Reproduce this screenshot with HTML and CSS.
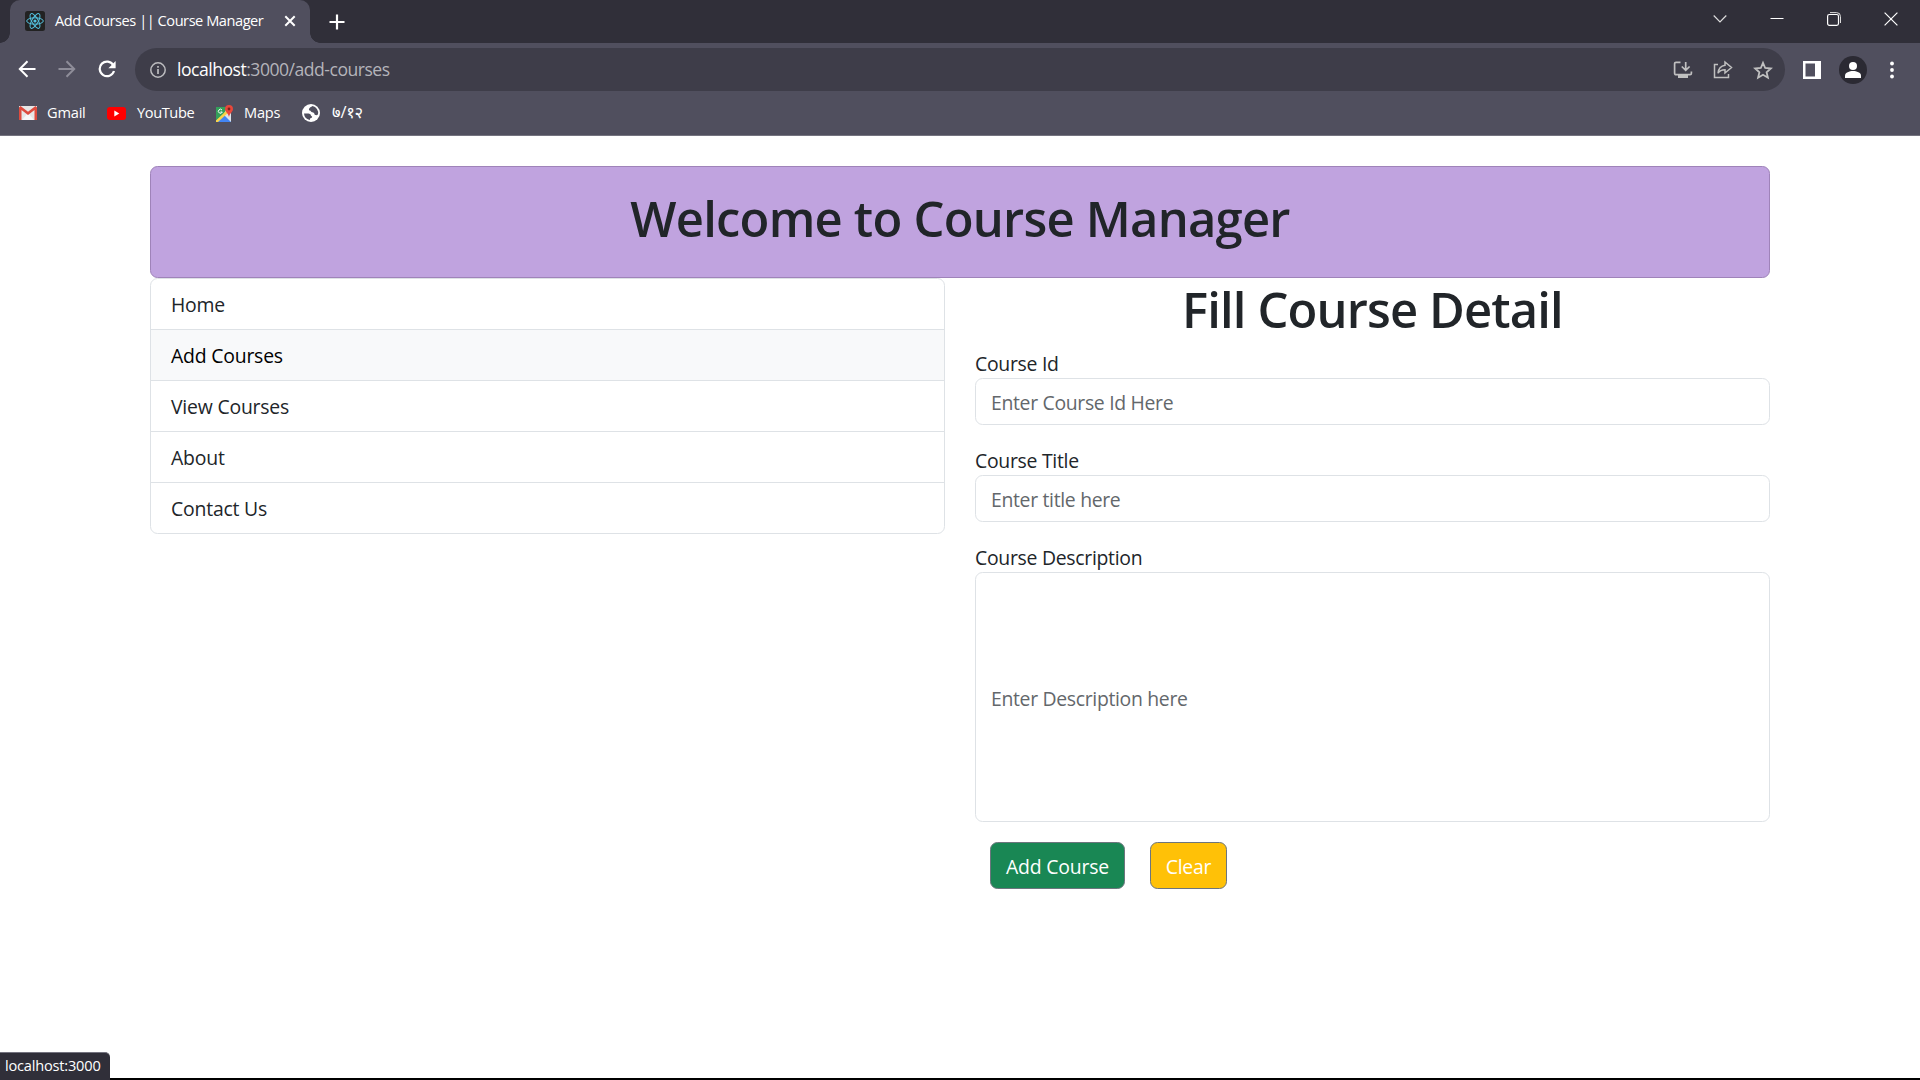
FILE: index.html
```html
<!DOCTYPE html>
<html lang="en">
<head>
<meta charset="utf-8">
<title>Add Courses || Course Manager</title>
<link rel="stylesheet" href="styles.css">
</head>
<body>
<header class="browser">
  <div class="tabstrip">
    <div class="tab">
      <svg class="favicon" width="20" height="20" viewBox="0 0 20 20"><rect width="20" height="20" rx="2.5" fill="#222"/><g fill="none" stroke="#53c1de" stroke-width="1"><ellipse cx="10" cy="10" rx="8.3" ry="3.2"/><ellipse cx="10" cy="10" rx="8.3" ry="3.2" transform="rotate(60 10 10)"/><ellipse cx="10" cy="10" rx="8.3" ry="3.2" transform="rotate(120 10 10)"/></g><circle cx="10" cy="10" r="1.6" fill="#53c1de"/></svg>
      <span class="tab-title">Add Courses || Course Manager</span>
      <svg class="tab-close" width="12" height="12" viewBox="0 0 12 12"><path d="M1.3 1.3l9.4 9.4M10.7 1.3l-9.4 9.4" stroke="#fff" stroke-width="2" fill="none"/></svg>
    </div>
    <svg class="new-tab" width="16" height="16" viewBox="0 0 16 16"><path d="M8 .5v15M.5 8h15" stroke="#fff" stroke-width="2.2" fill="none"/></svg>
    <div class="window-buttons">
      <svg width="14" height="14" viewBox="0 0 14 14"><path d="M.7 3.5L7 9.8l6.300-6.300" stroke="#ddd" stroke-width="1.200" fill="none"/></svg>
      <svg width="14" height="14" viewBox="0 0 14 14"><path d="M.5 6.500h13" stroke="#fff" fill="none"/></svg>
      <svg width="14" height="14" viewBox="0 0 14 14"><path d="M3 .6h6.500a4 4 0 0 1 4 4V11" stroke="#ddd" fill="none"/><rect x=".6" y="2.500" width="10.900" height="10.900" rx="1.800" stroke="#fff" stroke-width="1.200" fill="none"/></svg>
      <svg width="14" height="14" viewBox="0 0 14 14"><path d="M.6.6l12.800 12.800M13.400.6L.6 13.400" stroke="#fff" stroke-width="1.200" fill="none"/></svg>
    </div>
  </div>
  <div class="toolbar">
    <div class="nav-buttons">
      <svg width="18" height="18" viewBox="0 0 18 18"><path d="M17.500 9H2M9.500 1.300L1.800 9l7.700 7.700" stroke="#fff" stroke-width="2" fill="none"/></svg>
      <svg width="18" height="18" viewBox="0 0 18 18"><path d="M.5 9H16M8.500 1.300L16.200 9l-7.700 7.700" stroke="#8e8d99" stroke-width="2" fill="none"/></svg>
      <svg width="18" height="18" viewBox="0 0 18 18"><path d="M15.300 5.100A7.300 7.300 0 1 0 16 11" stroke="#fff" stroke-width="2.200" fill="none"/><path d="M17.600 1v7.200h-7.200z" fill="#fff"/></svg>
    </div>
    <div class="omnibox">
      <svg width="16" height="16" viewBox="0 0 16 16"><circle cx="8" cy="8" r="7.200" stroke="#bcbcbf" stroke-width="1.500" fill="none"/><path d="M8 7v5M8 4v1.700" stroke="#bcbcbf" stroke-width="1.700"/></svg>
      <span class="url"><b class="host">localhost</b>:3000/add-courses</span>
      <div class="page-actions">
        <svg width="20" height="20" viewBox="0 0 20 20"><path d="M7.500 2.300H3a1.400 1.400 0 0 0-1.400 1.400v9.600a1.400 1.400 0 0 0 1.400 1.400h14a1.400 1.400 0 0 0 1.400-1.400V11.500M12.700 2v8M8.800 6.500l3.900 3.900 3.900-3.900" stroke="#c0c0c0" stroke-width="1.700" fill="none"/><path d="M5 14.500h10v3.500H5z" fill="#c0c0c0"/></svg>
        <svg width="20" height="20" viewBox="0 0 20 20"><path d="M5 4.500H1.500v13h14V14M12 2l6.500 5.500L12 13v-3.300c-3.300 0-5.500 1-7 3.500.4-4 2.700-7.200 7-7.900z" stroke="#c0c0c0" stroke-width="1.500" fill="none"/></svg>
        <svg width="20" height="20" viewBox="0 0 20 20"><path d="M10 2.800l2.200 5.200 5.600.5-4.200 3.700 1.300 5.500-4.900-2.900-4.900 2.900 1.300-5.500L2.200 8.500l5.600-.5z" stroke="#c0c0c0" stroke-width="1.800" fill="none"/></svg>
      </div>
    </div>
    <svg class="side-panel" width="18" height="18" viewBox="0 0 18 18"><path fill="#fff" fill-rule="evenodd" d="M0 0h18v18H0zM2.500 2.500v13H12v-13z"/></svg>
    <svg class="profile" width="28" height="28" viewBox="0 0 28 28"><circle cx="14" cy="14" r="14" fill="#2b2a33"/><circle cx="14" cy="10" r="4" fill="#fff"/><path d="M6 22v-2.500C6 16.500 10.500 15 14 15s8 1.500 8 4.500V22z" fill="#fff"/></svg>
    <svg class="menu" width="4" height="18" viewBox="0 0 4 18"><g fill="#fff"><circle cx="2" cy="2.500" r="1.900"/><circle cx="2" cy="9" r="1.900"/><circle cx="2" cy="15.500" r="1.900"/></g></svg>
  </div>
  <nav class="bookmarks">
    <a class="bookmark gmail"><svg width="18" height="14" viewBox="0 0 18 14"><path d="M0 0h18v14H0z" fill="#e6e6e6"/><path d="M3 14l6-7 6 7z" fill="#f7f7f7"/><path d="M0 1.500V14h2.500V4L9 9l6.500-5v10H18V1.500L16.500 0 9 5.800 1.500 0z" fill="#dd4b3e"/></svg><span>Gmail</span></a>
    <a class="bookmark youtube"><svg width="19" height="13" viewBox="0 0 19 13"><rect width="19" height="13" rx="3" fill="#f00"/><path d="M7.300 3.500v6l5-3z" fill="#fff"/></svg><span>YouTube</span></a>
    <a class="bookmark maps"><svg width="19" height="19" viewBox="0 0 19 19"><path d="M1 3h15v15H1z" fill="#dce3e8"/><path d="M1 3h11L9 10 1 17z" fill="#34a05a"/><path d="M2 18l7-7 7 7z" fill="#4285f4"/><path d="M1 16.500L12 6l2 2L3 18H1z" fill="#f9d348"/><path d="M7 6a2 2 0 1 0 .3 2H5.500" stroke="#fff" fill="none"/><path d="M14 1a4 4 0 0 1 4 4c0 3-3.300 4-4 8-.7-4-4-5-4-8a4 4 0 0 1 4-4z" fill="#e8483b"/><circle cx="14" cy="5" r="1.400" fill="#7b231e"/></svg><span>Maps</span></a>
    <a class="bookmark globe"><svg width="18" height="18" viewBox="0 0 18 18"><circle cx="9" cy="9" r="9" fill="#fff"/><path d="M10.500 2C9 3.500 7.500 3 7 5c-.4 1.800 1.500 1.300 2 2.500.4 1.200 2 .4 3 1.500.8 1 .1 1.700 1.500 2 1 .3 1.800.1 2.500-.7A7.100 7.100 0 0 0 10.500 2zM2 9.500c2 0 4.500-.3 6 .5 1.200.8.500 1.700 1.700 2.200 1 .5.300 1.500-.7 1.700-1.200.2-.7 1.200-1.400 2A7.100 7.100 0 0 1 2 9.500z" fill="#504f5e"/></svg><span>७/१२</span></a>
  </nav>
</header>

<main class="page">
  <section class="banner"><h1 class="title">Welcome to Course Manager</h1></section>
  <div class="columns">
    <nav class="menu-list">
      <a class="menu-item">Home</a>
      <a class="menu-item active">Add Courses</a>
      <a class="menu-item">View Courses</a>
      <a class="menu-item">About</a>
      <a class="menu-item">Contact Us</a>
    </nav>
    <form class="course-form">
      <h1 class="title form-title">Fill Course Detail</h1>
      <div class="field"><label for="cid">Course Id</label><input id="cid" type="text" placeholder="Enter Course Id Here"></div>
      <div class="field"><label for="ctitle">Course Title</label><input id="ctitle" type="text" placeholder="Enter title here"></div>
      <div class="field"><label for="cdesc">Course Description</label><input id="cdesc" class="tall" type="text" placeholder="Enter Description here"></div>
      <div class="actions">
        <button class="btn success" type="button">Add Course</button>
        <button class="btn warning" type="button">Clear</button>
      </div>
    </form>
  </div>
</main>
<div class="screen-edge"></div>
<div class="status">localhost:3000</div>
</body>
</html>
```
FILE: styles.css
```css
* { box-sizing: border-box; }

body {
  margin: 0;
  height: 1080px;
  display: flex;
  flex-direction: column;
  overflow: hidden;
  background: #fff;
  color: #212529;
  font: 19.4px/30px "Open Sans", "Noto Sans", sans-serif;
  letter-spacing: -0.2px;
}

svg { display: block; flex: none; }

/* Browser window */
.browser {
  height: 136px;
  background: #504f5e;
  border-bottom: 1px solid #74737f;
  color: #fff;
  font-size: 14.6px;
  letter-spacing: -0.2px;
}
.tabstrip {
  height: 43px;
  display: flex;
  align-items: center;
  padding-left: 10px;
  background: #302f39;
}
.tab {
  position: relative;
  width: 300px;
  height: 43px;
  display: flex;
  align-items: center;
  padding: 0 14px 2px 15px;
  background: #504f5e;
  border-radius: 10px 10px 0 0;
}
.tab::before, .tab::after {
  content: "";
  position: absolute;
  bottom: 0;
  width: 10px;
  height: 10px;
}
.tab::before { left: -10px; background: radial-gradient(circle at 0 0, #302f39 9.5px, #504f5e 10px); }
.tab::after { right: -10px; background: radial-gradient(circle at 100% 0, #302f39 9.5px, #504f5e 10px); }
.tab-title { margin-left: 10px; padding-bottom: 2px; white-space: nowrap; letter-spacing: -0.46px; }
.tab-close { margin-left: auto; }
.new-tab { margin-left: 19px; }
.window-buttons {
  margin-left: auto;
  display: flex;
  gap: 43px;
  padding: 0 22px 6px 0;
}

.toolbar { height: 53px; display: flex; align-items: center; padding: 0 26px 0 18px; }
.nav-buttons { display: flex; gap: 22px; width: 117px; padding-bottom: 2px; }
.omnibox {
  width: 1650px;
  height: 43px;
  display: flex;
  align-items: center;
  padding: 0 12px 0 15px;
  border-radius: 22px;
  background: #3e3d49;
}
.url { margin-left: 11px; padding-bottom: 1px; font-size: 17.6px; color: #b4b4ba; letter-spacing: -0.5px; }
.host { font-weight: 400; color: #fff; }
.page-actions { margin-left: auto; display: flex; gap: 20px; }
.side-panel { margin-left: 18px; }
.profile { margin-left: 18px; }
.menu { margin-left: auto; }

.bookmarks { height: 34px; display: flex; align-items: center; padding-left: 19px; }
.bookmark { display: flex; align-items: center; }
.bookmark span { padding-bottom: 2px; }
.gmail { width: 88px; gap: 10px; }
.youtube { width: 108px; gap: 11px; letter-spacing: -0.4px; }
.maps { width: 87px; gap: 10px; }
.globe { gap: 12px; font-size: 16.5px; }

/* Course manager */
.page { width: 1620px; margin: 30px auto 0; }
.banner {
  height: 112px;
  padding-top: 20px;
  border: 1px solid #9f83b9;
  border-radius: 7.5px;
  background: #c0a3df;
}
.title {
  margin: 0;
  padding-top: 1px;
  font-size: 48.9px;
  font-weight: 600;
  line-height: 60px;
  letter-spacing: -0.76px;
  text-align: center;
}
.columns {
  display: grid;
  grid-template-columns: 1fr 1fr;
  gap: 30px;
  align-items: start;
}
.menu-list { border: 1px solid #dee2e6; border-radius: 7.5px; overflow: hidden; }
.menu-item {
  display: block;
  height: 51px;
  padding: 11px 20px 9px;
  border-bottom: 1px solid #dee2e6;
}
.menu-item:last-child { height: 50px; border-bottom: 0; }
.active { background: #f8f9fa; color: #000; }

.form-title { margin-bottom: 9px; letter-spacing: -0.86px; }
.field { margin-bottom: 20px; }
.field label { display: block; height: 30px; padding-top: 1px; letter-spacing: -0.28px; }
.field input {
  display: block;
  width: 100%;
  height: 47px;
  padding: 2px 15px 0;
  border: 1px solid #dee2e6;
  border-radius: 7.5px;
  background: #fff;
  font: inherit;
  letter-spacing: -0.32px;
}
.field .tall { height: 250px; }
.field input::placeholder { color: #63676b; opacity: 1; }
.actions { display: flex; gap: 25px; padding-left: 15px; }
.btn {
  height: 47px;
  padding: 2px 0 0;
  border: 1px solid #6c757d;
  border-radius: 7.5px;
  color: #fff;
  font: inherit;
  letter-spacing: inherit;
}
.success { width: 135px; background: #198754; }
.warning { width: 77px; background: #ffc107; }

.screen-edge { height: 2px; margin-top: auto; background: #000; }
.status {
  position: fixed;
  left: 0;
  bottom: 0;
  width: 110px;
  height: 28px;
  padding-left: 5px;
  border-top: 1px solid #74737f;
  border-radius: 0 5px 0 0;
  background: #302f39;
  color: #fff;
  font-size: 14.6px;
  line-height: 25px;
}
```
